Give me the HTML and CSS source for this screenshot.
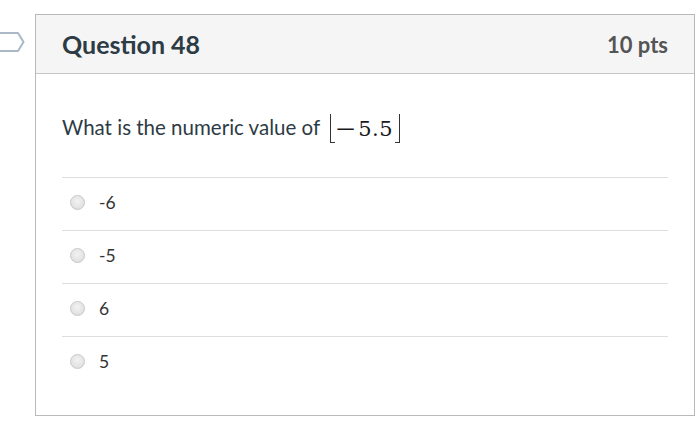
FILE: index.html
```html
<!DOCTYPE html>
<html>
<head>
<meta charset="utf-8">
<link rel="stylesheet" href="styles.css">
</head>
<body>
<div class="page">
  <div class="flag">
    <svg width="26" height="22" viewBox="0 0 26 22"><path d="M-2 2 H18 L23.5 11 L18 20 H-2" fill="none" stroke="#a9b7c6" stroke-width="2" stroke-linejoin="round"/></svg>
  </div>
  <div class="card">
    <div class="header">
      <h2 class="title">Question 48</h2>
      <div class="pts">10 pts</div>
    </div>
    <div class="content">
      <div class="question">What is the numeric value of <span class="math"><span class="floor-l"></span><span class="expr"><span class="minus">−</span>5.5</span><span class="floor-r"></span></span></div>
      <div class="answers">
        <label class="answer"><span class="radio"></span><span class="label">-6</span></label>
        <label class="answer"><span class="radio"></span><span class="label">-5</span></label>
        <label class="answer"><span class="radio"></span><span class="label">6</span></label>
        <label class="answer"><span class="radio"></span><span class="label">5</span></label>
      </div>
    </div>
  </div>
</div>
</body>
</html>
```
FILE: styles.css
```css
html, body { margin: 0; padding: 0; background: #fff; }
body { font-family: Lato, "Open Sans", sans-serif; color: #2d3b45; }
.page { display: flex; align-items: flex-start; padding-top: 14px; }
.flag { width: 35px; padding-top: 17px; display: flex; }
.flag svg { display: block; }
.card { width: 658px; border: 1px solid #b9b9b9; background: #fff; }
.header {
  height: 59px; box-sizing: border-box;
  background: #f5f5f5; border-bottom: 1px solid #c7c7c7;
  display: flex; align-items: center; justify-content: space-between;
  padding: 0 26px;
}
.title { margin: 0; font-size: 25px; font-weight: 700; color: #2d3b45; }
.pts { font-size: 22px; font-weight: 700; color: #555; }
.content { padding: 0 26px 26px; }
.question {
  height: 24px; padding: 41px 0 38px;
  font-size: 20.5px; line-height: 24px; color: #2d3b45;
  display: flex; align-items: center; white-space: nowrap;
}
.math { display: inline-flex; align-items: flex-end; margin-left: 10px; height: 29px; margin-top: 3px; }
.floor-l { display: inline-block; width: 4px; height: 28px; border-left: 1px solid #333; border-bottom: 1px solid #333; }
.floor-r { display: inline-block; width: 4px; height: 28px; border-right: 1px solid #333; border-bottom: 1px solid #333; }
.expr {
  font-family: "DejaVu Serif", "Liberation Serif", serif; font-size: 21px; color: #1a1a1a;
  line-height: 21px; padding: 0 2px 3px 0; letter-spacing: 0.5px;
}
.minus { display: inline-block; transform: scaleX(1.25); margin: 0 3px 0 2px; }
.answer {
  display: flex; align-items: center; height: 52px;
  border-top: 1px solid #dedede;
}
.answer .radio {
  width: 15px; height: 15px; box-sizing: border-box; border-radius: 50%;
  margin-left: 8px; margin-bottom: 3px;
  border: 1px solid #c8c8c8;
  background: radial-gradient(circle at 50% 40%, #f2f2f2 0%, #e4e4e4 60%, #d6d6d6 100%);
}
.answer .label { margin-left: 14px; margin-bottom: 3px; font-size: 17.5px; color: #333; }
```
